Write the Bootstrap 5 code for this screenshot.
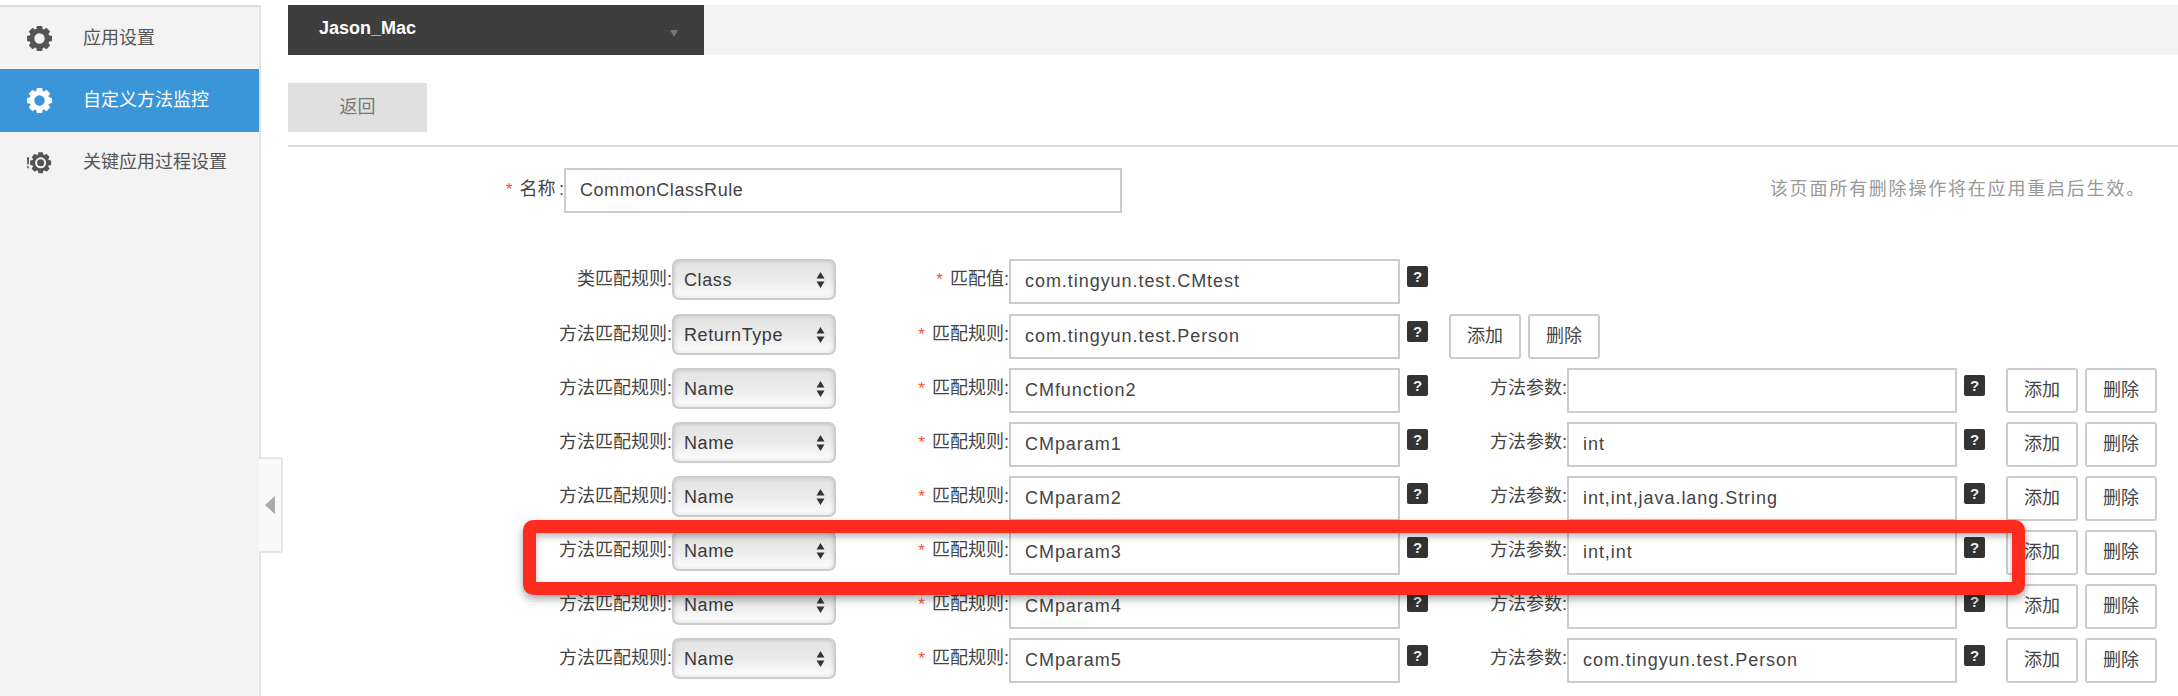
<!doctype html>
<html lang="zh-CN">
<head>
<meta charset="utf-8">
<title>自定义方法监控</title>
<link href="https://cdn.jsdelivr.net/npm/bootstrap@5.3.0/dist/css/bootstrap.min.css" rel="stylesheet">
<style>
html,body{height:696px;overflow:hidden;background:#fff}
body{font-family:"Liberation Sans","Noto Sans CJK SC",sans-serif;font-size:18px;color:#444;position:relative;padding-top:5px}
.shell{height:691px}
.side-nav{width:261px;flex:none;background:#f3f3f3;border-top:2px solid #ddd;border-right:2px solid #e3e3e3}
.side-item{height:63px;padding-left:27px;gap:31px;color:#555;font-size:18px;text-decoration:none}
.side-item:first-child{height:62px}
.side-item:last-child{padding-bottom:3px}
.side-item.is-on{background:#3a96d8;color:#fff}
.side-item svg{width:25px;height:25px;flex:none}
.main-pane{margin-left:27px;min-width:0}
.top-strip{height:50px;background:#f3f3f3}
.app-pick{width:416px;background:#3e3e3e;color:#fff;font-weight:700;font-size:18px;padding:0 26px 3px 31px}
.pick-caret{border-left:4px solid transparent;border-right:4px solid transparent;border-top:7px solid #777;margin-top:9px}
.back-btn{width:139px;height:49px;margin-top:28px;background:#e0e0e0;border:0;border-radius:0;color:#777;font-size:18px}
.rule-line{margin:13px 0 21px;border:0;border-top:2px solid #ddd;opacity:1}
.name-row{height:45px;margin-bottom:46px}
.name-label{width:276px;text-align:right;line-height:42px;flex:none}
.req{color:#f0532b;font-size:17px;margin-right:7px}
.text-box{height:45px;border:2px solid #ccc;border-radius:0;padding:0 14px;font-size:18px;color:#444;letter-spacing:.95px;flex:none}
.name-box{width:558px;letter-spacing:.55px}
.page-note{margin-left:auto;margin-right:32px;color:#999;font-size:18px;letter-spacing:1.8px;line-height:42px}
.rule-row{height:45px;margin-bottom:9px}
.rule-row.first-row{margin-bottom:10px}
.lab-a{width:384px;text-align:right;line-height:40px;flex:none}
.lab-b{width:173px;text-align:right;line-height:40px;flex:none}
.lab-c{width:139px;text-align:right;line-height:40px;flex:none}
.kind-select{width:164px;height:41px;flex:none;padding:2px 24px 0 10px;font-size:18px;color:#3a3a3a;letter-spacing:.6px;border:2px solid #ccc;border-radius:7px;box-shadow:inset 0 0 4px rgba(0,0,0,.16);
background:url("data:image/svg+xml,%3Csvg xmlns='http://www.w3.org/2000/svg' width='9' height='18'%3E%3Cpath d='M4.500 1l4 6.500H.5zM4.500 17l-4-6.500h8z' fill='%23333'/%3E%3C/svg%3E") no-repeat right 9px center,linear-gradient(#e3e3e3,#ebebeb 50%,#fdfdfd)}
.box-a{width:391px}
.box-b{width:390px}
.hint{width:21px;height:21px;margin:7px 0 0 7px;background:#333;color:#eee;font-weight:700;font-size:15px;line-height:21px;text-align:center;border-radius:2px;flex:none}
.mini-btn{width:72px;height:45px;padding:0;border:2px solid #ccc;border-radius:3px;background:#fff;color:#444;font-size:18px;flex:none}
.btn-pair{gap:7px;margin-left:21px}
.fold-tab{position:absolute;left:259px;top:457px;width:24px;height:96px;background:#f9f9f9;border:2px solid #e5e5e5;border-left:0;border-radius:0 3px 3px 0}
.fold-arrow{border-top:9px solid transparent;border-bottom:9px solid transparent;border-right:10px solid #aaa}
.mark-box{position:absolute;left:523px;top:520px;width:1502px;height:75px;border:13px solid #fe2c1e;border-radius:10px;box-shadow:0 4px 8px rgba(0,0,0,.35),inset 0 4px 6px rgba(0,0,0,.25)}
</style>
</head>
<body>
<svg width="0" height="0" class="position-absolute">
  <defs>
    <g id="teeth" fill="currentColor">
      <path id="tooth" d="M9.500 0h5l1 4.500h-7z"/>
      <use href="#tooth" transform="rotate(45 12 12)"/>
      <use href="#tooth" transform="rotate(90 12 12)"/>
      <use href="#tooth" transform="rotate(135 12 12)"/>
      <use href="#tooth" transform="rotate(180 12 12)"/>
      <use href="#tooth" transform="rotate(225 12 12)"/>
      <use href="#tooth" transform="rotate(270 12 12)"/>
      <use href="#tooth" transform="rotate(315 12 12)"/>
    </g>
    <g id="gear">
      <circle cx="12" cy="12" r="7.300" fill="none" stroke="currentColor" stroke-width="4.600"/>
      <use href="#teeth"/>
    </g>
  </defs>
</svg>
<div class="shell d-flex">
  <nav class="side-nav d-flex flex-column">
    <a class="side-item d-flex align-items-center" href="#"><svg viewBox="0 0 24 24"><use href="#gear"/></svg>应用设置</a>
    <a class="side-item is-on d-flex align-items-center" href="#"><svg viewBox="0 0 24 24"><use href="#gear"/></svg>自定义方法监控</a>
    <a class="side-item d-flex align-items-center" href="#"><svg viewBox="0 0 24 24"><g transform="translate(3 2.200) scale(.84)"><circle cx="12" cy="12" r="8" fill="none" stroke="currentColor" stroke-width="3.400"/><circle cx="12" cy="12" r="4" fill="currentColor"/><use href="#teeth"/></g><path d="M0 7h2l-.3 7H.3zM.2 15.500h1.600v2H.2z" fill="currentColor"/></svg>关键应用过程设置</a>
  </nav>
  <main class="main-pane flex-grow-1">
    <div class="top-strip d-flex">
      <div class="app-pick d-flex align-items-center justify-content-between"><span>Jason_Mac</span><span class="pick-caret"></span></div>
    </div>
    <button class="btn back-btn d-block" type="button">返回</button>
    <hr class="rule-line">
    <div class="name-row d-flex">
      <label class="name-label"><span class="req">*</span>名称&#8201;:</label>
      <input class="form-control text-box name-box" value="CommonClassRule">
      <span class="page-note">该页面所有删除操作将在应用重启后生效。</span>
    </div>

    <div class="rule-row first-row d-flex">
      <label class="lab-a">类匹配规则:</label>
      <select class="form-select kind-select"><option>Class</option></select>
      <label class="lab-b"><span class="req">*</span>匹配值:</label>
      <input class="form-control text-box box-a" value="com.tingyun.test.CMtest">
      <span class="hint">?</span>
    </div>
    <div class="rule-row d-flex">
      <label class="lab-a">方法匹配规则:</label>
      <select class="form-select kind-select"><option>ReturnType</option></select>
      <label class="lab-b"><span class="req">*</span>匹配规则:</label>
      <input class="form-control text-box box-a" value="com.tingyun.test.Person">
      <span class="hint">?</span>
      <div class="btn-pair d-flex"><button class="btn mini-btn" type="button">添加</button><button class="btn mini-btn" type="button">删除</button></div>
    </div>
    <div class="rule-row d-flex">
      <label class="lab-a">方法匹配规则:</label>
      <select class="form-select kind-select"><option>Name</option></select>
      <label class="lab-b"><span class="req">*</span>匹配规则:</label>
      <input class="form-control text-box box-a" value="CMfunction2">
      <span class="hint">?</span>
      <label class="lab-c">方法参数:</label>
      <input class="form-control text-box box-b" value="">
      <span class="hint">?</span>
      <div class="btn-pair d-flex"><button class="btn mini-btn" type="button">添加</button><button class="btn mini-btn" type="button">删除</button></div>
    </div>
    <div class="rule-row d-flex">
      <label class="lab-a">方法匹配规则:</label>
      <select class="form-select kind-select"><option>Name</option></select>
      <label class="lab-b"><span class="req">*</span>匹配规则:</label>
      <input class="form-control text-box box-a" value="CMparam1">
      <span class="hint">?</span>
      <label class="lab-c">方法参数:</label>
      <input class="form-control text-box box-b" value="int">
      <span class="hint">?</span>
      <div class="btn-pair d-flex"><button class="btn mini-btn" type="button">添加</button><button class="btn mini-btn" type="button">删除</button></div>
    </div>
    <div class="rule-row d-flex">
      <label class="lab-a">方法匹配规则:</label>
      <select class="form-select kind-select"><option>Name</option></select>
      <label class="lab-b"><span class="req">*</span>匹配规则:</label>
      <input class="form-control text-box box-a" value="CMparam2">
      <span class="hint">?</span>
      <label class="lab-c">方法参数:</label>
      <input class="form-control text-box box-b" value="int,int,java.lang.String">
      <span class="hint">?</span>
      <div class="btn-pair d-flex"><button class="btn mini-btn" type="button">添加</button><button class="btn mini-btn" type="button">删除</button></div>
    </div>
    <div class="rule-row d-flex">
      <label class="lab-a">方法匹配规则:</label>
      <select class="form-select kind-select"><option>Name</option></select>
      <label class="lab-b"><span class="req">*</span>匹配规则:</label>
      <input class="form-control text-box box-a" value="CMparam3">
      <span class="hint">?</span>
      <label class="lab-c">方法参数:</label>
      <input class="form-control text-box box-b" value="int,int">
      <span class="hint">?</span>
      <div class="btn-pair d-flex"><button class="btn mini-btn" type="button">添加</button><button class="btn mini-btn" type="button">删除</button></div>
    </div>
    <div class="rule-row d-flex">
      <label class="lab-a">方法匹配规则:</label>
      <select class="form-select kind-select"><option>Name</option></select>
      <label class="lab-b"><span class="req">*</span>匹配规则:</label>
      <input class="form-control text-box box-a" value="CMparam4">
      <span class="hint">?</span>
      <label class="lab-c">方法参数:</label>
      <input class="form-control text-box box-b" value="">
      <span class="hint">?</span>
      <div class="btn-pair d-flex"><button class="btn mini-btn" type="button">添加</button><button class="btn mini-btn" type="button">删除</button></div>
    </div>
    <div class="rule-row d-flex">
      <label class="lab-a">方法匹配规则:</label>
      <select class="form-select kind-select"><option>Name</option></select>
      <label class="lab-b"><span class="req">*</span>匹配规则:</label>
      <input class="form-control text-box box-a" value="CMparam5">
      <span class="hint">?</span>
      <label class="lab-c">方法参数:</label>
      <input class="form-control text-box box-b" value="com.tingyun.test.Person">
      <span class="hint">?</span>
      <div class="btn-pair d-flex"><button class="btn mini-btn" type="button">添加</button><button class="btn mini-btn" type="button">删除</button></div>
    </div>
  </main>
</div>
<div class="fold-tab d-flex align-items-center justify-content-center"><span class="fold-arrow"></span></div>
<div class="mark-box"></div>
<script src="https://cdn.jsdelivr.net/npm/bootstrap@5.3.0/dist/js/bootstrap.bundle.min.js"></script>
</body>
</html>
